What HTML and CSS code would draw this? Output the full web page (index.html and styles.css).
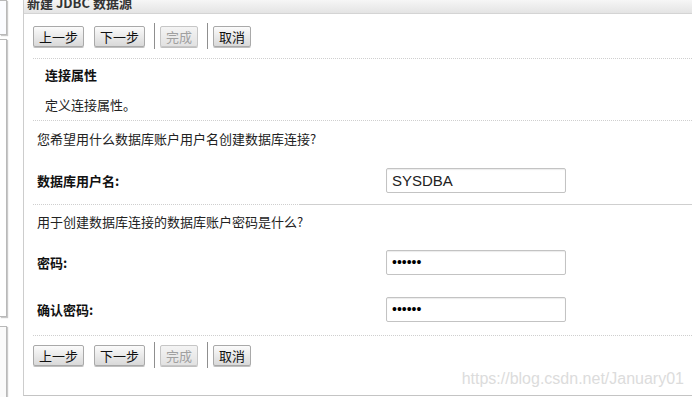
FILE: index.html
```html
<!DOCTYPE HTML>
<html>
<head>
<meta charset="utf-8">
<link rel="stylesheet" href="styles.css">
</head>
<body>
<div class="page">
  <div class="side">
    <div class="sbox sbox-top"></div>
    <div class="sbox sbox-mid"></div>
    <div class="sbox sbox-low"></div>
  </div>
  <div class="panel">
    <div class="title"><span>新建 JDBC 数据源</span></div>
    <div class="body">
      <div class="btnbar">
        <button class="btn">上一步</button>
        <button class="btn">下一步</button>
        <span class="sep"></span>
        <button class="btn" disabled>完成</button>
        <span class="sep"></span>
        <button class="btn">取消</button>
      </div>
      <div class="rule"></div>
      <div class="head">连接属性</div>
      <div class="desc">定义连接属性。</div>
      <div class="rule"></div>
      <div class="question q1">您希望用什么数据库账户用户名创建数据库连接?</div>
      <div class="field f-user">
        <label class="lbl">数据库用户名:</label>
        <input class="txt" type="text" value="SYSDBA">
      </div>
      <div class="rule rule-mixed"></div>
      <div class="question q2">用于创建数据库连接的数据库账户密码是什么?</div>
      <div class="field f-pass">
        <label class="lbl">密码:</label>
        <input class="txt pw" type="password" value="123456">
      </div>
      <div class="field f-conf">
        <label class="lbl">确认密码:</label>
        <input class="txt pw" type="password" value="123456">
      </div>
      <div class="rule"></div>
      <div class="btnbar btnbar-low">
        <button class="btn">上一步</button>
        <button class="btn">下一步</button>
        <span class="sep"></span>
        <button class="btn" disabled>完成</button>
        <span class="sep"></span>
        <button class="btn">取消</button>
      </div>
    </div>
  </div>
</div>
<div class="mark">https://blog.csdn.net/January01</div>
</body>
</html>
```

FILE: styles.css
```css
html, body
{
  margin: 0;
  padding: 0;
  background: #fff;
}
body
{
  font-family: "Noto Sans CJK SC", "Liberation Sans", sans-serif;
  font-size: 13px;
  color: #222;
  width: 692px;
  height: 397px;
  overflow: hidden;
  position: relative;
}
.page
{
  display: flex;
  height: 397px;
}

/* left strip: bits of the panels beside the wizard */
.side
{
  width: 23px;
  display: flex;
  flex-direction: column;
  background: #fff;
}
.sbox
{
  width: 6px;
  background: #fbfcff;
  border: 1px solid #b9b9b9;
  border-left: none;
  box-shadow: 1px 1px 1px #c9c9c9;
}
.sbox-top { height: 33px; }
.sbox-mid { height: 276px; margin-top: 4px; background: #fff; }
.sbox-low { flex: 1; margin-top: 9px; border-bottom: none; background: #fafafa; }

/* the wizard */
.panel
{
  flex: 1;
  border-left: 1px solid #cdcdcd;
  border-bottom: 1px solid #c4c4c4;
  height: 395px;
  display: flex;
  flex-direction: column;
}
.title
{
  height: 13px;
  overflow: hidden;
  background: linear-gradient(#f6f6f6, #e4e4e4);
  border-bottom: 1px solid #d4d4d4;
  padding-left: 3px;
}
.title span
{
  display: block;
  font-weight: bold;
  font-size: 13px;
  line-height: 14px;
  margin-top: -4px;
  color: #333;
}
.body
{
  padding-left: 9px;
}
.btnbar
{
  display: flex;
  align-items: center;
  height: 44px;
}
.btnbar-low
{
  height: 38px;
}
.btn
{
  font-family: "Noto Sans CJK SC", sans-serif;
  font-size: 13px;
  color: #111;
  height: 21px;
  padding: 0 5px;
  line-height: 19px;
  border: 1px solid #a9a9a9;
  border-radius: 2px;
  background: linear-gradient(#fbfbfb, #d9d9d9);
  box-shadow: 0 1px 0 #c0c0c0;
  margin-right: 10px;
}
.btn:disabled
{
  color: #a0a0a0;
  background: linear-gradient(#f4f4f4, #e2e2e2);
  border-color: #c6c6c6;
}
.sep
{
  width: 1px;
  height: 26px;
  background: #8f8f8f;
  margin-right: 5px;
  margin-left: -1px;
}
.rule
{
  border-top: 1px dotted #cfcfcf;
}
.rule-mixed
{
  border-top: none;
  height: 1px;
  background: linear-gradient(to right, transparent 267px, #cfcfcf 267px);
}
.rule-mixed:before
{
  content: "";
  display: block;
  width: 267px;
  border-top: 1px dotted #cfcfcf;
}
.head
{
  height: 31px;
  line-height: 31px;
  padding-left: 12px;
  font-weight: bold;
  color: #111;
}
.desc
{
  height: 30px;
  line-height: 30px;
  padding-left: 12px;
}
.question
{
  padding-left: 4px;
  height: 36px;
  line-height: 36px;
}
.q2
{
  height: 34px;
  line-height: 34px;
}
.field
{
  display: flex;
  align-items: center;
  padding-left: 4px;
}
.f-user { height: 47px; }
.f-pass { height: 46px; }
.f-conf { height: 48px; padding-bottom: 2px; }
.lbl
{
  width: 349px;
  font-weight: bold;
  color: #111;
}
.txt
{
  padding: 0 5px;
  box-sizing: border-box;
  width: 180px;
  height: 25px;
  border: 1px solid #c3c3c3;
  border-radius: 2px;
  box-shadow: inset 0 1px 1px #ececec;
  font-family: "Liberation Sans", Arial, sans-serif;
  font-size: 15px;
  color: #222;
}
.pw
{
  font-size: 14px;
  color: #000;
}
.mark
{
  position: absolute;
  right: 8px;
  bottom: 9px;
  font-family: "Liberation Sans", Arial, sans-serif;
  font-size: 16px;
  color: #dcdcdc;
}
```
